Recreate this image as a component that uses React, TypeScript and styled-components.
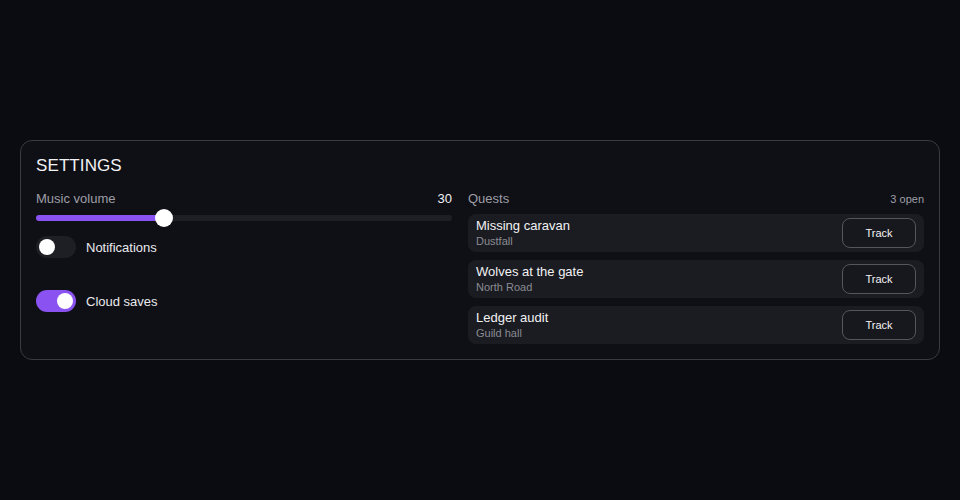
import * as React from "react"
import styled, { createGlobalStyle } from "styled-components"

const Global = createGlobalStyle`
  html, body {
    margin: 0;
    padding: 0;
    background: #0b0b12;
    font-family: "Liberation Sans", Arial, sans-serif;
  }
`

const Page = styled.div`
  width: 960px;
  height: 500px;
  display: flex;
  align-items: center;
  justify-content: center;
`

const Card = styled.section`
  width: 920px;
  box-sizing: border-box;
  padding: 14px 15px 15px;
  border: 1px solid #3a3b42;
  border-radius: 12px;
  background: #0f1016;
  color: #f2f2f5;
`

const Title = styled.h2`
  margin: 0 0 13px;
  font-size: 17px;
  font-weight: 400;
  line-height: 22px;
  letter-spacing: 0.1px;
`

const Columns = styled.div`
  display: grid;
  grid-template-columns: 416fr 456fr;
  gap: 16px;
`

const Column = styled.div`
  display: flex;
  flex-direction: column;
`

const HeadRow = styled.div`
  display: flex;
  justify-content: space-between;
  align-items: baseline;
  height: 17px;
  margin-top: 1px;
`

const Label = styled.span`
  font-size: 13px;
  color: #9d9ea6;
`

const Value = styled.span`
  font-size: 13px;
  color: #f2f2f5;
`

const Count = styled.span`
  font-size: 11px;
  color: #9d9ea6;
`

const Track = styled.div`
  position: relative;
  height: 6px;
  margin: 7px 0 0;
  border-radius: 3px;
  background: #1e1f25;
`

const Fill = styled.div`
  height: 100%;
  border-radius: 3px;
  background: #8a52f0;
`

const Thumb = styled.div`
  position: absolute;
  top: 50%;
  width: 18px;
  height: 18px;
  border-radius: 50%;
  background: #ffffff;
  transform: translate(-50%, -50%);
`

const ToggleRow = styled.label<{ $gap: number }>`
  display: flex;
  align-items: center;
  gap: 10px;
  margin-top: ${(p) => p.$gap}px;
  font-size: 13px;
  color: #eaeaee;
`

const Switch = styled.span<{ $on: boolean }>`
  position: relative;
  width: 40px;
  height: 22px;
  border-radius: 11px;
  background: ${(p) => (p.$on ? "#8a52f0" : "#1e1f25")};

  &::after {
    content: "";
    position: absolute;
    top: 3px;
    left: ${(p) => (p.$on ? "21px" : "3px")};
    width: 16px;
    height: 16px;
    border-radius: 50%;
    background: #ffffff;
  }
`

const QuestList = styled.ul`
  list-style: none;
  margin: 6px 0 0;
  padding: 0;
  display: flex;
  flex-direction: column;
  gap: 8px;
`

const QuestRow = styled.li`
  display: flex;
  align-items: center;
  justify-content: space-between;
  height: 38px;
  box-sizing: border-box;
  padding: 0 8px;
  border-radius: 8px;
  background: #1b1c21;
`

const QuestText = styled.div`
  display: flex;
  flex-direction: column;
`

const QuestName = styled.span`
  font-size: 13px;
  line-height: 16px;
  color: #f2f2f5;
`

const QuestPlace = styled.span`
  font-size: 11px;
  line-height: 14px;
  color: #8a8b93;
`

const TrackButton = styled.button`
  width: 74px;
  height: 30px;
  border: 1px solid #55565d;
  border-radius: 8px;
  background: #17181d;
  color: #f2f2f5;
  font-family: inherit;
  font-size: 11px;
`

const quests = [
  { name: "Missing caravan", place: "Dustfall" },
  { name: "Wolves at the gate", place: "North Road" },
  { name: "Ledger audit", place: "Guild hall" },
]

export default function App() {
  const volume = 30
  return (
    <Page>
      <Global />
      <Card>
        <Title>SETTINGS</Title>
        <Columns>
          <Column>
            <HeadRow>
              <Label>Music volume</Label>
              <Value>{volume}</Value>
            </HeadRow>
            <Track>
              <Fill style={{ width: `${volume * 1.025}%` }} />
              <Thumb style={{ left: `${volume * 1.025}%` }} />
            </Track>
            <ToggleRow $gap={15}>
              <Switch $on={false} />
              Notifications
            </ToggleRow>
            <ToggleRow $gap={32}>
              <Switch $on={true} />
              Cloud saves
            </ToggleRow>
          </Column>
          <Column>
            <HeadRow>
              <Label>Quests</Label>
              <Count>{quests.length} open</Count>
            </HeadRow>
            <QuestList>
              {quests.map((q) => (
                <QuestRow key={q.name}>
                  <QuestText>
                    <QuestName>{q.name}</QuestName>
                    <QuestPlace>{q.place}</QuestPlace>
                  </QuestText>
                  <TrackButton>Track</TrackButton>
                </QuestRow>
              ))}
            </QuestList>
          </Column>
        </Columns>
      </Card>
    </Page>
  )
}
